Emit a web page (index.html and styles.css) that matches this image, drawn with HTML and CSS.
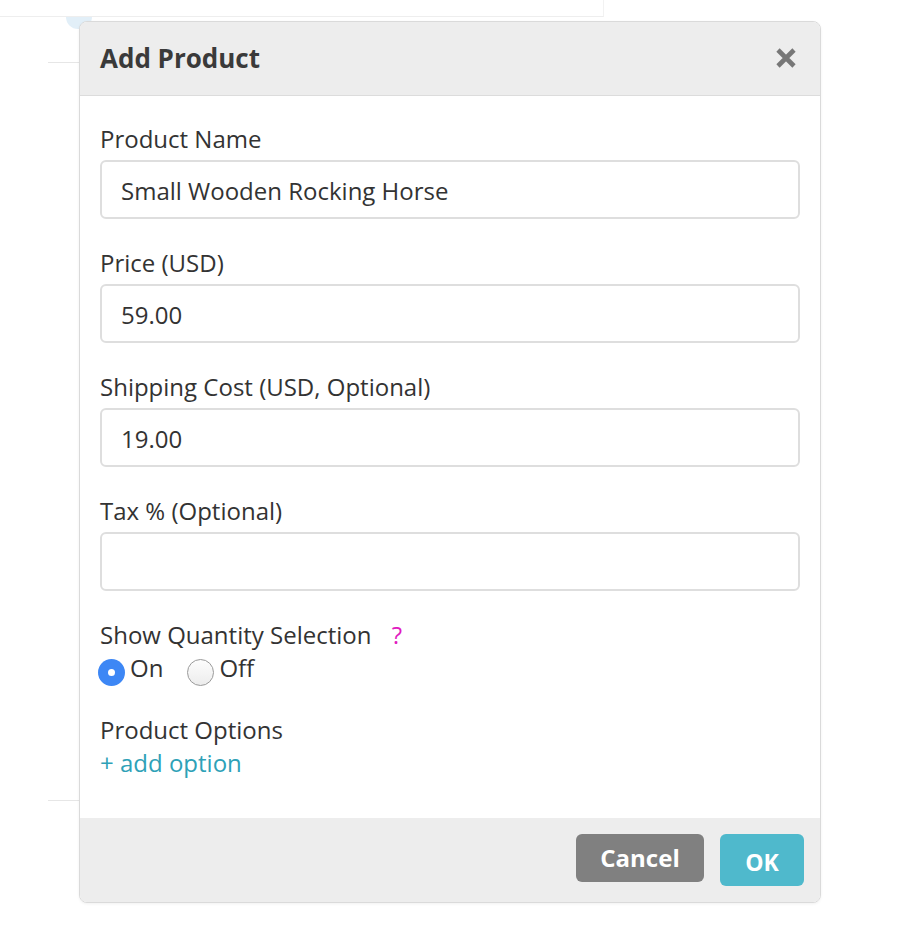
FILE: index.html
```html
<!DOCTYPE html>
<html lang="en">
<head>
<meta charset="utf-8">
<title>Add Product</title>
<link rel="stylesheet" href="styles.css">
</head>
<body>
<div class="page">
  <div class="topbar"></div>
  <div class="avatar"></div>
  <div class="rule rule-a"></div>
  <div class="rule rule-b"></div>
</div>

<div class="modal">
  <div class="modal-header">
    <h2 class="modal-title">Add Product</h2>
    <button class="close" aria-label="Close">
      <svg width="22" height="22" viewBox="0 0 22 22"><path d="M3 3 L19 19 M19 3 L3 19" stroke="#777" stroke-width="4.6" stroke-linecap="butt" fill="none"/></svg>
    </button>
  </div>
  <div class="modal-body">
    <label class="label">Product Name</label>
    <div class="input">Small Wooden Rocking Horse</div>

    <label class="label">Price (USD)</label>
    <div class="input">59.00</div>

    <label class="label">Shipping Cost (USD, Optional)</label>
    <div class="input">19.00</div>

    <label class="label">Tax % (Optional)</label>
    <div class="input"></div>

    <div class="label qty">Show Quantity Selection <span class="help">?</span></div>
    <div class="radios">
      <span class="radio on"></span><span class="radio-text">On</span>
      <span class="radio off"></span><span class="radio-text">Off</span>
    </div>

    <div class="label options">Product Options</div>
    <a class="add-option">+ add option</a>
  </div>
  <div class="modal-footer">
    <button class="btn btn-cancel">Cancel</button>
    <button class="btn btn-ok">OK</button>
  </div>
</div>
</body>
</html>
```

FILE: styles.css
```css
html, body {
  margin: 0;
  padding: 0;
  background: #fff;
  font-family: "Open Sans", "Noto Sans", sans-serif;
  color: #333;
}

.page {
  width: 900px;
  height: 928px;
  overflow: hidden;
}

.topbar {
  width: 603px;
  height: 16px;
  border-bottom: 1px solid #eeeeee;
  border-right: 1px solid #f2f2f2;
}

.avatar {
  width: 26px;
  height: 12px;
  margin-left: 66px;
  border-radius: 0 0 13px 13px;
  background: #e2eff8;
}

.rule {
  width: 60px;
  margin-left: 48px;
  border-top: 1px solid #e6e6e6;
}

.rule-a { margin-top: 33px; }
.rule-b { margin-top: 737px; }

.modal {
  position: absolute;
  left: 79px;
  top: 21px;
  width: 740px;
  height: 880px;
  border: 1px solid #dadada;
  border-radius: 8px;
  background: #fff;
  display: flex;
  flex-direction: column;
  overflow: hidden;
  box-shadow: 0 1px 3px rgba(0, 0, 0, 0.06);
}

.modal-header {
  height: 73px;
  flex: none;
  background: #ededed;
  border-bottom: 1px solid #dcdcdc;
  display: flex;
  align-items: center;
  justify-content: space-between;
  padding: 0 23px 0 20px;
}

.modal-title {
  margin: 0;
  font-size: 26px;
  font-weight: 700;
  color: #3a3a3a;
  margin-top: -2px;
}

.close {
  border: 0;
  background: none;
  padding: 0;
  width: 22px;
  height: 22px;
  display: flex;
  margin-top: -2px;
}

.modal-body {
  flex: 1;
  padding: 28px 20px 0 20px;
  display: flex;
  flex-direction: column;
}

.label {
  display: block;
  font-size: 24px;
  line-height: 30px;
  height: 30px;
  margin-bottom: 6px;
  color: #333;
}

.input {
  height: 55px;
  border: 2px solid #dedede;
  border-radius: 6px;
  padding: 0 19px;
  font-size: 24px;
  line-height: 57px;
  color: #333;
  margin-bottom: 29px;
}

.qty {
  margin-bottom: 0;
}

.help {
  color: #e11bc0;
  margin-left: 14px;
}

.radios {
  display: flex;
  align-items: center;
  height: 36px;
  font-size: 24px;
  line-height: 30px;
  margin-left: -2px;
}

.radio {
  width: 27px;
  height: 27px;
  border-radius: 50%;
  box-sizing: border-box;
  flex: none;
  position: relative;
  margin-top: 8px;
}

.radio.on {
  background: #3d87f5;
}

.radio.on::after {
  content: "";
  position: absolute;
  left: 10px;
  top: 10px;
  width: 7px;
  height: 7px;
  border-radius: 50%;
  background: #fff;
}

.radio.off {
  border: 1px solid #9a9a9a;
  background: linear-gradient(#fdfdfd, #ececec);
  margin-left: 24px;
}

.radio-text {
  margin-left: 5px;
  margin-top: -1px;
}

.options {
  margin-top: 29px;
  margin-bottom: 3px;
}

.add-option {
  font-size: 24px;
  line-height: 30px;
  color: #2ea1b7;
  cursor: pointer;
}

.modal-footer {
  height: 84px;
  flex: none;
  background: #ededed;
  box-sizing: border-box;
  padding: 16px 16px 0 0;
  display: flex;
  justify-content: flex-end;
  align-items: flex-start;
  gap: 16px;
}

.btn {
  border: 0;
  border-radius: 6px;
  font-family: "Open Sans", "Noto Sans", sans-serif;
  font-weight: 700;
  color: #fff;
  padding: 0;
}

.btn-cancel {
  width: 128px;
  height: 48px;
  background: #808080;
  font-size: 24px;
  padding-bottom: 2px;
}

.btn-ok {
  width: 84px;
  height: 52px;
  background: #4fb9cc;
  font-size: 23px;
  padding-top: 4px;
}
```
